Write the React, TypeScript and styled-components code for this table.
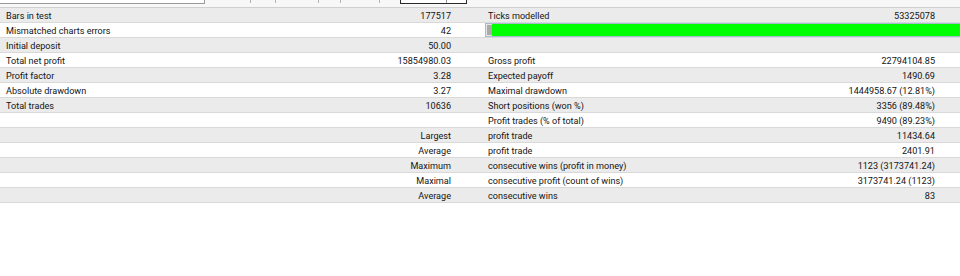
import React from "react";
import styled, { createGlobalStyle } from "styled-components";

const Global = createGlobalStyle`
  html, body { margin: 0; padding: 0; background: #ffffff; }
  body { font-family: Roboto, "Noto Sans", sans-serif; color: #141414; }
`;

const Page = styled.div`
  width: 960px;
  height: 276px;
  overflow: hidden;
  background: #ffffff;
`;

const TopStrip = styled.div`
  display: flex;
  height: 7px;
  background: #f7f7f7;
`;

const Field = styled.div`
  width: 204px;
  height: 3px;
  background: #ffffff;
  border-right: 1px solid #9a9a9a;
  border-bottom: 1px solid #9a9a9a;
`;

const TabStrip = styled.div`
  display: flex;
  height: 4px;
`;

const Tab = styled.div<{ $w: number; $sep?: boolean }>`
  width: ${(p) => p.$w}px;
  height: 3px;
  border-right: ${(p) => (p.$sep === false ? "none" : "1px solid #b4b4b4")};
`;

const ActiveTab = styled.div`
  display: flex;
  width: 65px;
  height: 3px;
  border: 1px solid #2a2a2a;
  border-top: none;
  background: #ffffff;
`;

const ActiveInner = styled.div`
  width: 45px;
  height: 3px;
  border-right: 1px solid #9a9a9a;
`;

const Table = styled.div`
  border-top: 1px solid #cfcfcf;
`;

const Row = styled.div<{ $alt: boolean }>`
  display: grid;
  grid-template-columns: 480px 480px;
  height: 14px;
  border-bottom: 1px solid #d9d9d9;
  background: ${(p) => (p.$alt ? "#ebebeb" : "#ffffff")};
  font-size: 9.1px;
  line-height: 14px;
`;

const Half = styled.div<{ $right?: boolean }>`
  display: flex;
  justify-content: space-between;
  align-items: flex-start;
  padding: ${(p) => (p.$right ? "2px 25px 0 8px" : "2px 29px 0 6px")};
  height: 12px;
  white-space: nowrap;
`;

const Label = styled.span`
  line-height: 12px;
`;
const Value = styled.span`
  margin-left: auto;
  line-height: 12px;
`;

const BarHalf = styled.div`
  display: flex;
  align-items: center;
  padding-left: 5px;
`;

const Progress = styled.div`
  flex: 1;
  display: flex;
  height: 12px;
  border: 1px solid #a8bccf;
  border-right: none;
  background: #e6e6e6;
`;

const ProgressStart = styled.div`
  width: 5px;
  margin: 1px 0 1px 1px;
  background: #aaaaaa;
`;

const ProgressFill = styled.div`
  flex: 1;
  background: #00ff00;
`;

type R = [string, string, string, string];

const rows: R[] = [
  ["Bars in test", "177517", "Ticks modelled", "53325078"],
  ["Mismatched charts errors", "42", "", ""],
  ["Initial deposit", "50.00", "", ""],
  ["Total net profit", "15854980.03", "Gross profit", "22794104.85"],
  ["Profit factor", "3.28", "Expected payoff", "1490.69"],
  ["Absolute drawdown", "3.27", "Maximal drawdown", "1444958.67 (12.81%)"],
  ["Total trades", "10636", "Short positions (won %)", "3356 (89.48%)"],
  ["", "", "Profit trades (% of total)", "9490 (89.23%)"],
  ["", "Largest", "profit trade", "11434.64"],
  ["", "Average", "profit trade", "2401.91"],
  ["", "Maximum", "consecutive wins (profit in money)", "1123 (3173741.24)"],
  ["", "Maximal", "consecutive profit (count of wins)", "3173741.24 (1123)"],
  ["", "Average", "consecutive wins", "83"],
];

export default function App() {
  return (
    <Page>
      <Global />
      <TopStrip>
        <Field />
        <TabStrip>
          <Tab $w={45} />
          <Tab $w={24} />
          <Tab $w={42} />
          <Tab $w={21} />
          <Tab $w={38} />
          <Tab $w={20} $sep={false} />
          <ActiveTab>
            <ActiveInner />
          </ActiveTab>
        </TabStrip>
      </TopStrip>
      <Table>
        {rows.map((r, i) => (
          <Row key={i} $alt={i % 2 === 0}>
            <Half>
              <Label>{r[0]}</Label>
              <Value>{r[1]}</Value>
            </Half>
            {i === 1 ? (
              <BarHalf>
                <Progress>
                  <ProgressStart />
                  <ProgressFill />
                </Progress>
              </BarHalf>
            ) : (
              <Half $right>
                <Label>{r[2]}</Label>
                <Value>{r[3]}</Value>
              </Half>
            )}
          </Row>
        ))}
      </Table>
    </Page>
  );
}
